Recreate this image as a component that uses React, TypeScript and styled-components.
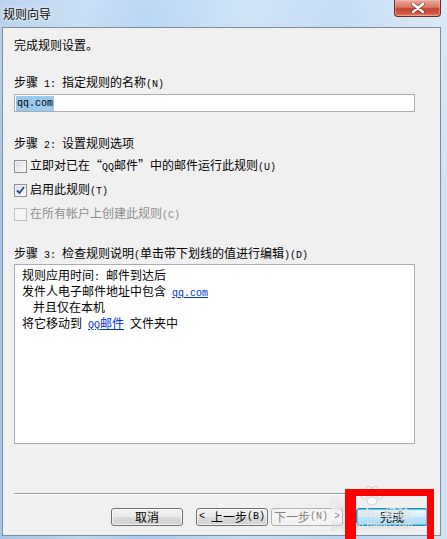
import React from 'react'
import styled, { createGlobalStyle, css } from 'styled-components'

const GlobalStyle = createGlobalStyle`
    html, body {
        margin: 0;
        padding: 0;
    }
    body {
        width: 447px;
        height: 539px;
        overflow: hidden;
        font-family: "Noto Sans CJK SC", "Noto Sans", sans-serif;
        font-size: 12px;
        color: #000;
    }
`

const Window = styled.div`
    position: relative;
    width: 447px;
    height: 539px;
    display: flex;
    flex-direction: column;
    box-sizing: border-box;
    background:
        linear-gradient(180deg, rgba(255, 255, 255, 0.25), rgba(255, 255, 255, 0) 40%),
        linear-gradient(90deg, #a3c5e6 0%, #bad6f0 18%, #a6cbee 32%, #c3dcf3 55%, #b5d3ef 75%, #cfe2f4 100%);
`

const TitleBar = styled.div`
    height: 27px;
    display: flex;
    align-items: flex-start;
    justify-content: space-between;
    flex-shrink: 0;
`

const Title = styled.div`
    margin: 6px 0 0 3px;
    line-height: 15px;
    font-size: 12px;
    text-shadow: 0 0 5px rgba(255, 255, 255, 0.95), 0 0 2px rgba(255, 255, 255, 0.9);
`

const CloseButton = styled.div`
    width: 47px;
    height: 17px;
    margin-right: 6px;
    box-sizing: border-box;
    border: 1px solid #6e2a22;
    border-top: none;
    border-radius: 0 0 4px 4px;
    background: linear-gradient(180deg, #e8a899 0%, #d97a68 45%, #c5432f 55%, #cf5a43 85%, #e08a72 100%);
    box-shadow: inset 0 0 0 1px rgba(255, 200, 190, 0.45);
    display: flex;
    align-items: center;
    justify-content: center;
`

const Client = styled.div`
    flex: 1;
    margin: 0 6px 3px 2px;
    border: 1px solid #7d8ea3;
    background: #f0f0f0;
    padding: 9px 12px 9px 11px;
    display: flex;
    flex-direction: column;
    line-height: 16px;
`

const Intro = styled.div`
    height: 16px;
`

const StepLabel = styled.div<{ $gap: number }>`
    margin-top: ${(p) => p.$gap}px;
    height: 16px;
    white-space: nowrap;
`

// half-width latin chars, 6px per cell like the dialog's system font
const Half = styled.span`
    font-family: "Liberation Mono", "DejaVu Sans Mono", monospace;
    font-size: 10px;
    white-space: pre;
`

const NameInput = styled.div`
    margin-top: 4px;
    width: 401px;
    height: 18px;
    box-sizing: border-box;
    border: 1px solid #abadb3;
    background: #fff;
    padding: 1px 1px;
    display: flex;
    align-items: center;
`

const Selected = styled.span`
    background: #99c9ef;
    font-family: "Liberation Mono", "DejaVu Sans Mono", monospace;
    font-size: 10px;
    line-height: 15px;
    padding: 0 1px 0 1px;
`

const Options = styled.div`
    margin-top: 7px;
    display: flex;
    flex-direction: column;
    gap: 8px;
`

const OptionRow = styled.label<{ $disabled?: boolean }>`
    height: 16px;
    display: flex;
    align-items: center;
    gap: 3px;
    white-space: nowrap;
    color: ${(p) => (p.$disabled ? '#8d8d8d' : '#000')};
`

const Box = styled.span<{ $disabled?: boolean }>`
    width: 13px;
    height: 13px;
    box-sizing: border-box;
    border: 1px solid ${(p) => (p.$disabled ? '#c0c0c0' : '#8e8f8f')};
    background: ${(p) =>
        p.$disabled
            ? '#f4f4f4'
            : 'linear-gradient(135deg, #d6d9de 0%, #eef0f2 60%, #fbfbfb 100%)'};
    box-shadow: inset 0 0 0 1px #f4f4f4;
    display: flex;
    align-items: center;
    justify-content: center;
    flex-shrink: 0;
`

const DescBox = styled.div`
    margin-top: 3px;
    width: 401px;
    height: 180px;
    box-sizing: border-box;
    border: 1px solid #abadb3;
    background: #fff;
    padding: 2px 7px;
`

const DescLine = styled.div<{ $indent?: boolean }>`
    height: 16px;
    white-space: nowrap;
    padding-left: ${(p) => (p.$indent ? 11 : 0)}px;
`

const Link = styled.span`
    color: #0033cc;
    text-decoration: underline;
`

const Footer = styled.div`
    margin-top: auto;
    display: flex;
    flex-direction: column;
`

const Separator = styled.div`
    height: 1px;
    background: #a0a0a0;
    border-bottom: 1px solid #fff;
`

const ButtonRow = styled.div`
    margin-top: 13px;
    display: flex;
    justify-content: flex-end;
`

const Button = styled.div<{ $gap?: number; $disabled?: boolean; $default?: boolean }>`
    width: 72px;
    height: 18px;
    margin-left: ${(p) => p.$gap ?? 0}px;
    box-sizing: border-box;
    border: 1px solid #707070;
    border-radius: 3px;
    background: linear-gradient(180deg, #f2f2f2 0%, #ebebeb 48%, #dddddd 52%, #cfcfcf 100%);
    box-shadow: inset 0 0 0 1px rgba(255, 255, 255, 0.7);
    display: flex;
    align-items: center;
    justify-content: center;
    line-height: 16px;
    white-space: nowrap;
    ${(p) =>
        p.$disabled &&
        css`
            border-color: #adb2b5;
            background: #f4f4f4;
            color: #838383;
            box-shadow: none;
        `}
    ${(p) =>
        p.$default &&
        css`
            border-color: #3c7fb1;
            background: linear-gradient(180deg, #eaf6fd 0%, #d9f0fc 48%, #bee6fd 52%, #a7d9f5 100%);
            box-shadow: inset 0 0 0 1px #48d0f8;
        `}
`

const Watermark = styled.div`
    position: absolute;
    left: 328px;
    top: 485px;
    width: 110px;
    height: 50px;
    pointer-events: none;
    color: rgba(255, 255, 255, 0.8);
    text-shadow: 0 0 1px rgba(120, 120, 120, 0.55);
    font-family: "Liberation Sans", Arial, sans-serif;
`

const MarkBrand = styled.span`
    position: absolute;
    left: 2px;
    top: 11px;
    font-size: 16px;
    font-weight: bold;
    letter-spacing: 1px;
`

const MarkDu = styled.span`
    position: absolute;
    left: 33px;
    top: 20px;
    font-size: 13px;
    font-weight: bold;
`

const MarkCn = styled.span`
    position: absolute;
    left: 56px;
    top: 18px;
    font-size: 13px;
    font-family: "Noto Sans CJK SC", sans-serif;
`

const MarkUrl = styled.span`
    position: absolute;
    left: 4px;
    top: 35px;
    font-size: 10px;
`

const MarkPaw = styled.svg`
    position: absolute;
    left: 31px;
    top: 1px;
`

const Highlight = styled.div`
    position: absolute;
    left: 345px;
    top: 489px;
    width: 89px;
    height: 57px;
    box-sizing: border-box;
    border: 7px solid #ff0000;
    border-left-width: 11px;
    pointer-events: none;
`

function CheckBox({ checked, disabled }: { checked?: boolean; disabled?: boolean }) {
    return (
        <Box $disabled={disabled}>
            {checked && (
                <svg width="9" height="9" viewBox="0 0 9 9">
                    <path d="M1 4.5 L3.5 7 L8 1" fill="none" stroke="#2b3f8f" strokeWidth="1.8" />
                </svg>
            )}
        </Box>
    )
}

export default function App() {
    return (
        <>
            <GlobalStyle />
            <Window>
                <TitleBar>
                    <Title>规则向导</Title>
                    <CloseButton>
                        <svg width="14" height="10" viewBox="0 0 14 10">
                            <path
                                d="M2 1 L12 9 M12 1 L2 9"
                                stroke="#3a1410"
                                strokeWidth="4"
                                strokeLinecap="round"
                                opacity="0.55"
                            />
                            <path d="M2 1 L12 9 M12 1 L2 9" stroke="#ffffff" strokeWidth="2.4" strokeLinecap="round" />
                        </svg>
                    </CloseButton>
                </TitleBar>
                <Client>
                    <Intro>完成规则设置。</Intro>
                    <StepLabel $gap={21}>
                        步骤<Half> 1: </Half>指定规则的名称<Half>(N)</Half>
                    </StepLabel>
                    <NameInput>
                        <Selected>qq.com</Selected>
                    </NameInput>
                    <StepLabel $gap={23}>
                        步骤<Half> 2: </Half>设置规则选项
                    </StepLabel>
                    <Options>
                        <OptionRow>
                            <CheckBox />
                            <span>
                                立即对已在“<Half>QQ</Half>邮件”中的邮件运行此规则<Half>(U)</Half>
                            </span>
                        </OptionRow>
                        <OptionRow>
                            <CheckBox checked />
                            <span>
                                启用此规则<Half>(T)</Half>
                            </span>
                        </OptionRow>
                        <OptionRow $disabled>
                            <CheckBox disabled />
                            <span>
                                在所有帐户上创建此规则<Half>(C)</Half>
                            </span>
                        </OptionRow>
                    </Options>
                    <StepLabel $gap={23}>
                        步骤<Half> 3: </Half>检查规则说明<Half>(</Half>单击带下划线的值进行编辑<Half>)(D)</Half>
                    </StepLabel>
                    <DescBox>
                        <DescLine>
                            规则应用时间<Half>: </Half>邮件到达后
                        </DescLine>
                        <DescLine>
                            发件人电子邮件地址中包含<Half> </Half>
                            <Link>
                                <Half>qq.com</Half>
                            </Link>
                        </DescLine>
                        <DescLine $indent>并且仅在本机</DescLine>
                        <DescLine>
                            将它移动到<Half> </Half>
                            <Link>
                                <Half>QQ</Half>邮件
                            </Link>
                            <Half> </Half>文件夹中
                        </DescLine>
                    </DescBox>
                    <Footer>
                        <Separator />
                        <ButtonRow>
                            <Button>取消</Button>
                            <Button $gap={13}>
                                <Half>&lt; </Half>上一步<Half>(B)</Half>
                            </Button>
                            <Button $gap={3} $disabled>
                                下一步<Half>(N) &gt;</Half>
                            </Button>
                            <Button $gap={13} $default>
                                完成
                            </Button>
                        </ButtonRow>
                    </Footer>
                </Client>
                <Watermark>
                    <MarkPaw width="26" height="20" viewBox="0 0 26 20">
                        <g fill="rgba(255,255,255,0.85)" stroke="rgba(150,150,150,0.5)" strokeWidth="0.8">
                            <ellipse cx="5" cy="9" rx="3" ry="3.5" />
                            <ellipse cx="10" cy="4" rx="3" ry="3.5" />
                            <ellipse cx="16" cy="4" rx="3" ry="3.5" />
                            <ellipse cx="21" cy="9" rx="3" ry="3.5" />
                            <ellipse cx="13" cy="15" rx="5" ry="4" />
                        </g>
                    </MarkPaw>
                    <MarkBrand>Bai</MarkBrand>
                    <MarkDu>du</MarkDu>
                    <MarkCn>经验</MarkCn>
                    <MarkUrl>jingyan.baidu.com</MarkUrl>
                </Watermark>
                <Highlight />
            </Window>
        </>
    )
}
